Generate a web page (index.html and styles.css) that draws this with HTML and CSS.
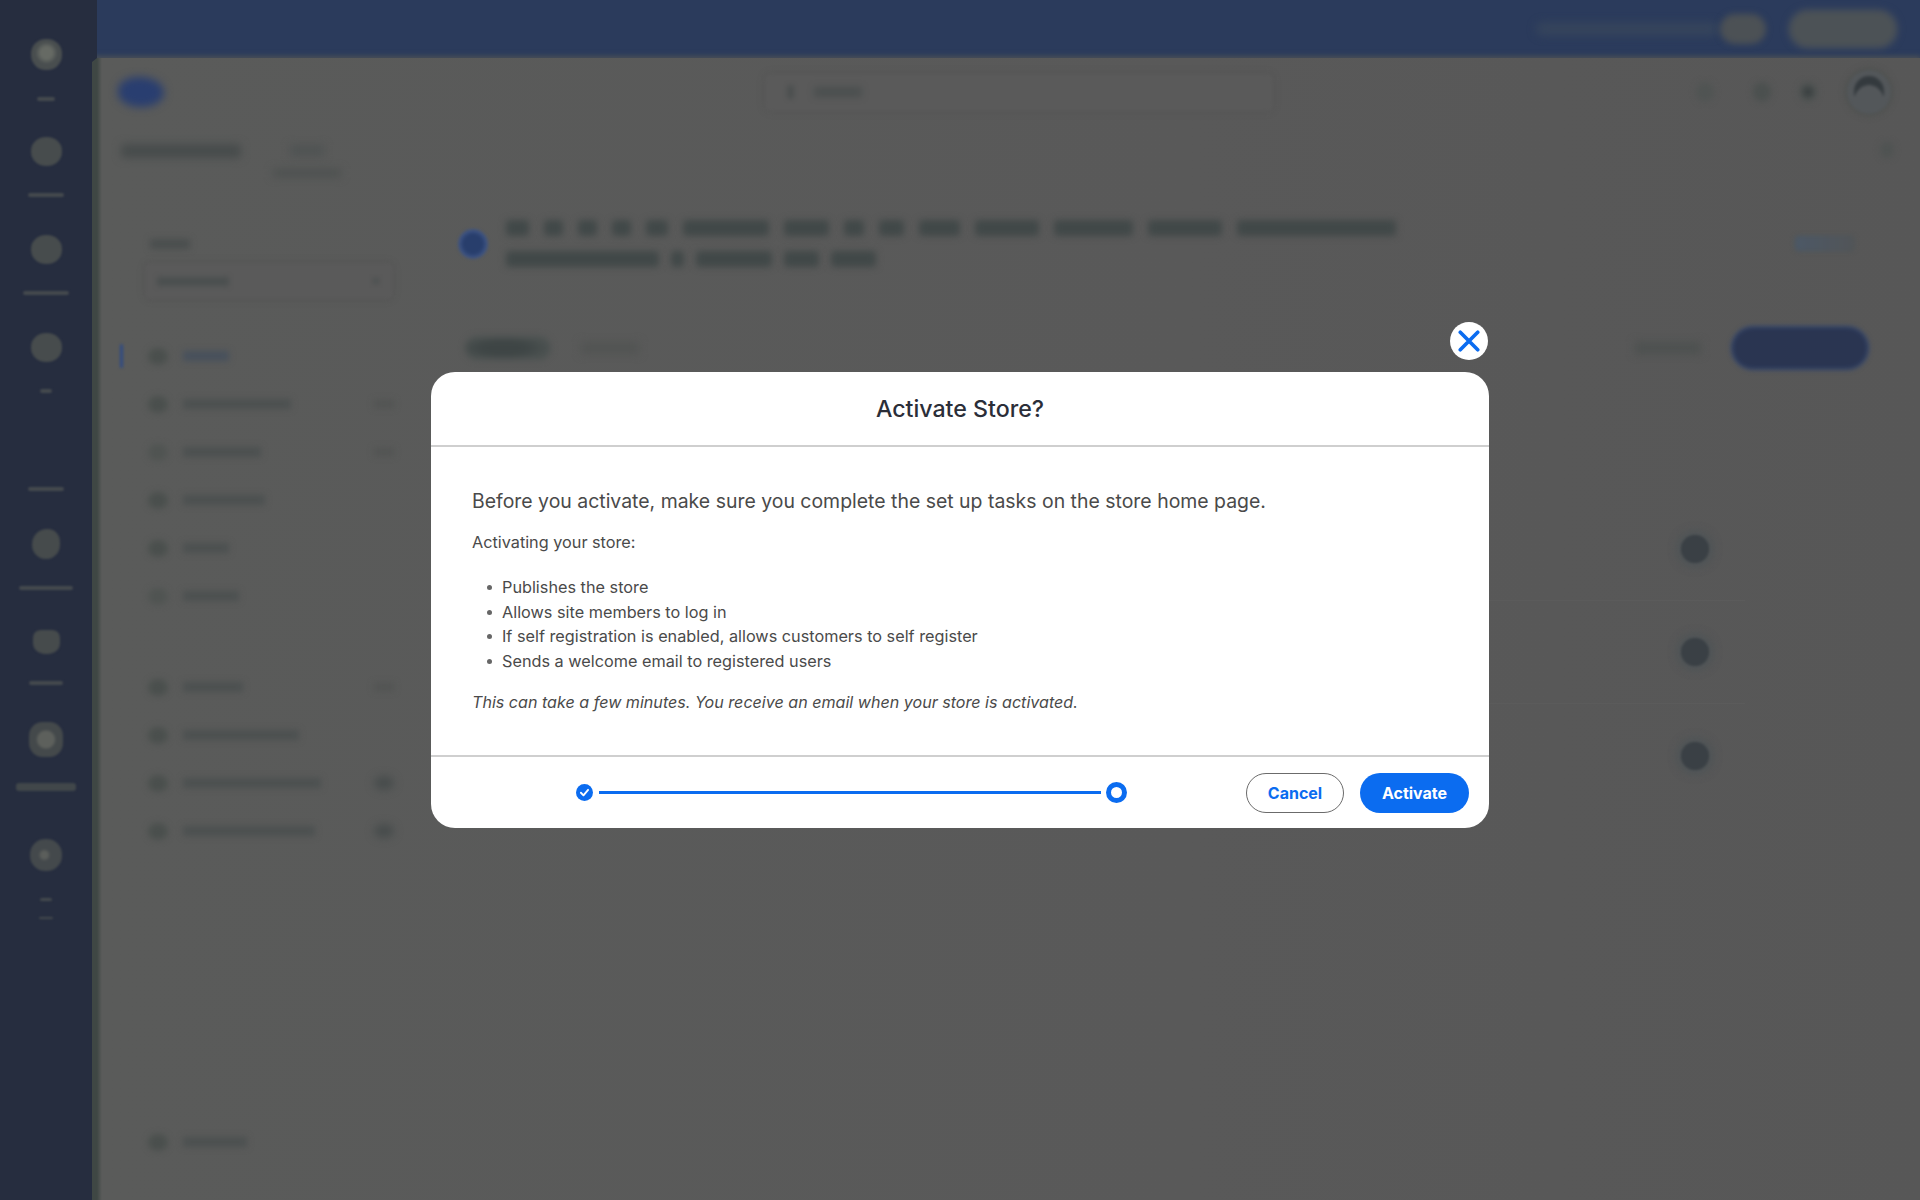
FILE: index.html
```html
<!DOCTYPE html>
<html lang="en">
<head>
<meta charset="utf-8">
<title>Activate Store?</title>
<link rel="stylesheet" href="styles.css">
</head>
<body>
<div class="app" aria-hidden="true">
  <nav class="rail">
    <div class="rail-item"><i class="rail-icon first"></i><i class="rail-label w18"></i></div>
    <div class="rail-item"><i class="rail-icon"></i><i class="rail-label w36"></i></div>
    <div class="rail-item"><i class="rail-icon"></i><i class="rail-label w46"></i></div>
    <div class="rail-item"><i class="rail-icon"></i><i class="rail-label w12"></i></div>
    <div class="rail-item"><i class="rail-icon none"></i><i class="rail-label w36"></i></div>
    <div class="rail-item"><i class="rail-icon oval"></i><i class="rail-label w54"></i></div>
    <div class="rail-item"><i class="rail-icon short"></i><i class="rail-label w34"></i></div>
    <div class="rail-item"><i class="rail-icon boxed"></i><i class="rail-label w60 thick"></i></div>
    <div class="rail-item last"><i class="rail-icon dim"></i><i class="rail-label w12"></i><i class="rail-label w14"></i></div>
  </nav>
  <div class="column">
    <header class="topbar">
      <i class="promo-text"></i>
      <i class="promo-pill"></i>
      <i class="promo-button"></i>
    </header>
    <main class="main">
      <div class="headbar">
        <i class="logo"></i>
        <div class="search"><i class="search-icon"></i><i class="search-text"></i></div>
        <div class="head-icons">
          <i class="head-icon faint"></i>
          <i class="head-icon"></i>
          <i class="head-icon dot"></i>
          <i class="avatar"></i>
        </div>
      </div>
      <div class="tabs">
        <i class="tab-active"></i>
        <div class="tab-stack"><i class="tab-top"></i><i class="tab-bottom"></i></div>
        <i class="tab-close"></i>
      </div>
      <div class="body">
        <aside class="sidebar">
          <i class="side-label"></i>
          <div class="side-select"><i class="side-select-text"></i><i class="side-caret"></i></div>
          <div class="nav-group first-group">
            <div class="nav-row"><i class="marker on"></i><i class="nav-icon"></i><i class="nav-text blue w46"></i></div>
            <div class="nav-row"><i class="marker"></i><i class="nav-icon"></i><i class="nav-text w108"></i><i class="nav-end"></i></div>
            <div class="nav-row"><i class="marker"></i><i class="nav-icon faint"></i><i class="nav-text w78"></i><i class="nav-end"></i></div>
            <div class="nav-row"><i class="marker"></i><i class="nav-icon"></i><i class="nav-text w82"></i></div>
            <div class="nav-row"><i class="marker"></i><i class="nav-icon"></i><i class="nav-text w46"></i></div>
            <div class="nav-row"><i class="marker"></i><i class="nav-icon faint"></i><i class="nav-text w56"></i></div>
          </div>
          <div class="nav-group">
            <div class="nav-row"><i class="marker"></i><i class="nav-icon"></i><i class="nav-text w60"></i><i class="nav-end"></i></div>
            <div class="nav-row"><i class="marker"></i><i class="nav-icon"></i><i class="nav-text w116"></i></div>
            <div class="nav-row"><i class="marker"></i><i class="nav-icon"></i><i class="nav-text w138"></i><i class="nav-end badge"></i></div>
            <div class="nav-row"><i class="marker"></i><i class="nav-icon"></i><i class="nav-text w132"></i><i class="nav-end badge"></i></div>
          </div>
          <div class="nav-group bottom-group">
            <div class="nav-row"><i class="marker"></i><i class="nav-icon"></i><i class="nav-text w64"></i></div>
          </div>
        </aside>
        <section class="content">
          <div class="banner">
            <i class="banner-icon"></i>
            <div class="banner-text">
              <div class="banner-line"><i class="word w23"></i><i class="word w19"></i><i class="word w19"></i><i class="word w19"></i><i class="word w22"></i><i class="word w86"></i><i class="word w45"></i><i class="word w20"></i><i class="word w25"></i><i class="word w41"></i><i class="word w64"></i><i class="word w79"></i><i class="word w74"></i><i class="word w159"></i></div>
              <div class="banner-line tight"><i class="word w153"></i><i class="word w13"></i><i class="word w76"></i><i class="word w35"></i><i class="word w45"></i></div>
            </div>
            <i class="banner-pill"></i>
          </div>
          <div class="toolbar">
            <i class="chip"></i>
            <i class="chip-ghost"></i>
            <i class="manage"></i>
            <i class="primary"></i>
          </div>
          <div class="rows">
            <div class="row"><i class="row-dot"></i></div>
            <div class="row"><i class="row-dot"></i></div>
            <div class="row"><i class="row-dot"></i></div>
          </div>
        </section>
      </div>
    </main>
  </div>
</div>

<div class="overlay">
  <div class="modal" role="dialog" aria-labelledby="modal-title">
    <button class="close" type="button" aria-label="Close">
      <svg class="close-icon" viewBox="0 0 24 24" aria-hidden="true"><path d="M2.5 2.5 21.5 21.5M21.5 2.5 2.5 21.5"/></svg>
    </button>
    <h1 class="modal-title" id="modal-title">Activate Store?</h1>
    <div class="modal-body">
      <p class="lead">Before you activate, make sure you complete the set up tasks on the store home page.</p>
      <p class="intro">Activating your store:</p>
      <ul class="list">
        <li>Publishes the store</li>
        <li>Allows site members to log in</li>
        <li>If self registration is enabled, allows customers to self register</li>
        <li>Sends a welcome email to registered users</li>
      </ul>
      <p class="note">This can take a few minutes. You receive an email when your store is activated.</p>
    </div>
    <div class="modal-footer">
      <div class="stepper">
        <svg class="step-done" viewBox="0 0 18 18" aria-hidden="true"><circle cx="9" cy="9" r="9"/><path d="M5.2 9.3 7.9 12 12.8 6.2"/></svg>
        <span class="step-line"></span>
        <span class="step-current"></span>
      </div>
      <div class="actions">
        <button class="btn btn-outline" type="button">Cancel</button>
        <button class="btn btn-solid" type="button">Activate</button>
      </div>
    </div>
  </div>
</div>
</body>
</html>
```

FILE: styles.css
```css
* { box-sizing: border-box; }
html, body { margin: 0; height: 100%; overflow: hidden; background: #595959; }
body { font-family: Inter, "Noto Sans", "Liberation Sans", sans-serif; }
i { display: block; flex: none; }

/* blurred application behind the dialog */
.app { display: flex; height: 1200px; }

.rail { width: 97px; flex: none; background: #262d3f; display: flex; flex-direction: column; padding-top: 5px; position: relative; z-index: 1; clip-path: polygon(0 0, 100% 0, 100% 58px, 92px 62px, 92px 100%, 0 100%); }
.rail-item { height: 98px; display: flex; flex-direction: column; align-items: center; padding-top: 34px; padding-right: 5px; }
.rail-item.last { height: 120px; padding-top: 50px; }
.rail-icon { width: 31px; height: 29px; border-radius: 48%; background: #474c4d; filter: blur(1px); }
.rail-icon.first { background: radial-gradient(circle at 50% 45%, #666a64 0 25%, #494e4f 48%); height: 31px; }
.rail-icon.none { visibility: hidden; }
.rail-icon.oval { width: 28px; height: 30px; border-radius: 55% 45% 50% 50%; background: #464b4c; }
.rail-icon.short { width: 27px; height: 24px; border-radius: 30% 30% 45% 45%; margin-top: 3px; background: #464b4c; }
.rail-icon.boxed { width: 34px; height: 35px; margin-top: -3px; border-radius: 40%; background: radial-gradient(circle at 50% 50%, #5d605c 0 32%, #44494b 42%); }
.rail-icon.dim { width: 32px; height: 32px; background: radial-gradient(circle at 45% 50%, #5b5e5b 0 14%, #44494c 26%); }
.rail-label { height: 4px; border-radius: 3px; background: #454a4e; margin-top: 27px; filter: blur(1px); }
.rail-icon.boxed + .rail-label { margin-top: 26px; }
.rail-label.thick { height: 8px; background: #41474a; }
.rail-item.last .rail-label { margin-top: 27px; height: 3px; }
.rail-item.last .rail-label + .rail-label { margin-top: 16px; height: 2px; }

.column { flex: 1; min-width: 0; display: flex; flex-direction: column; margin-left: -5px; }
.topbar { height: 58px; flex: none; margin-left: 5px; background: #2b3b5c; display: flex; align-items: center; justify-content: flex-end; padding: 0 24px 0 0; position: relative; }
.promo-text { width: 183px; height: 14px; border-radius: 7px; background: #35445c; filter: blur(4px); }
.promo-pill { width: 46px; height: 30px; border-radius: 15px; background: #4c5155; filter: blur(3px); margin-left: 1px; }
.promo-button { width: 106px; height: 36px; border-radius: 18px; background: #4c5256; box-shadow: 0 0 0 3px #3a465c; filter: blur(3px); margin-left: 24px; }

.main { flex: 1; min-height: 0; display: flex; flex-direction: column; background: linear-gradient(90deg, #3f4744 0, #3f4744 5px, #5a5b5a 10px, #595959 60%, #575757 100%); box-shadow: 0 -1px 5px 1px #4b5056; position: relative; }

.headbar { height: 68px; flex: none; display: flex; align-items: center; padding: 0 29px 0 26px; }
.logo { width: 46px; height: 30px; border-radius: 50% 60% 55% 55%; background: #293e70; filter: blur(4px); }
.search { width: 508px; height: 37px; margin-left: 601px; display: flex; align-items: center; padding-left: 22px; border-radius: 6px; background: #5a5a5a; box-shadow: 0 0 5px 1px #555; filter: blur(1.5px); }
.search-icon { width: 7px; height: 14px; border-radius: 4px; background: #4b4f4f; filter: blur(2px); }
.search-text { width: 48px; height: 10px; margin-left: 20px; background: #4b4f4f; filter: blur(3px); }
.head-icons { margin-left: auto; display: flex; align-items: center; }
.head-icon { width: 18px; height: 20px; border-radius: 50%; background: #4b504f; filter: blur(3px); margin-right: 28px; }
.head-icon.faint { background: #505453; margin-right: 39px; }
.head-icon.dot { margin-right: 30px; background: radial-gradient(circle, #363c3d 0 25%, #4d5251 45%); }
.avatar { width: 44px; height: 44px; border-radius: 50%; background: #53575a; position: relative; filter: blur(1.5px); box-shadow: 0 0 5px 2px #4e514f; }
.avatar::after { content: ""; position: absolute; left: 7px; top: 6px; width: 30px; height: 20px; border-radius: 15px 15px 0 0; background: radial-gradient(ellipse 15px 16px at 50% 125%, transparent 0 98%, #343a3e 100%); }

.tabs { height: 60px; flex: none; display: flex; align-items: flex-start; padding: 4px 26px 0 29px; }
.tab-active { width: 120px; height: 14px; margin-top: 14px; border-radius: 4px; background: #474c4c; filter: blur(4px); }
.tab-stack { margin-left: 32px; display: flex; flex-direction: column; align-items: center; }
.tab-top { width: 34px; height: 11px; margin-top: 15px; background: #4f5353; filter: blur(4px); }
.tab-bottom { width: 68px; height: 8px; margin-top: 13px; background: #4d5150; filter: blur(4px); }
.tab-close { width: 14px; height: 16px; margin-left: auto; margin-top: 12px; background: #4f5352; border-radius: 50%; filter: blur(3px); }

.body { flex: 1; min-height: 0; display: flex; }
.sidebar { width: 338px; flex: none; display: flex; flex-direction: column; padding: 53px 24px 34px 58px; }
.side-label { width: 40px; height: 10px; background: #4a4e4e; filter: blur(3px); }
.side-select { height: 36px; margin-top: 14px; margin-left: -5px; width: 248px; display: flex; align-items: center; padding: 0 14px 0 12px; border-radius: 6px; background: #5a5a5a; box-shadow: 0 0 5px 1px #545454; filter: blur(1.5px); }
.side-select-text { width: 72px; height: 9px; background: #4a4f4f; filter: blur(2.5px); }
.side-caret { width: 6px; height: 6px; margin-left: auto; background: #4c5050; filter: blur(2px); }
.nav-group { display: flex; flex-direction: column; margin-left: -30px; }
.first-group { margin-top: 33px; }
.nav-group + .nav-group { margin-top: 43px; }
.nav-group.bottom-group { margin-top: auto; }
.nav-row { height: 48px; flex: none; display: flex; align-items: center; }
.marker { width: 3px; height: 24px; margin-right: 25px; border-radius: 2px; }
.marker.on { background: #2f4a84; filter: blur(1.5px); }
.nav-icon { width: 20px; height: 17px; border-radius: 50%; background: #4a4f4d; filter: blur(3px); }
.nav-icon.faint { background: #505452; }
.nav-text { height: 10px; margin-left: 15px; background: #4c5050; filter: blur(3px); }
.nav-text.blue { background: #47505c; }
.nav-end { width: 20px; height: 8px; margin-left: auto; margin-right: 12px; background: #525453; filter: blur(3px); }
.nav-end.badge { height: 14px; background: #474c4c; border-radius: 50%; filter: blur(4px); }

.content { flex: 1; min-width: 0; display: flex; flex-direction: column; }
.banner { display: flex; align-items: center; padding: 9px 65px 0 28px; height: 106px; flex: none; }
.banner-icon { width: 30px; height: 30px; border-radius: 50%; background: radial-gradient(circle, #283e6c 0 45%, #3c5282 62%, #4a5a72 100%); filter: blur(1.5px); }
.banner-text { margin-left: 18px; display: flex; flex-direction: column; gap: 15px; }
.banner-line { display: flex; gap: 15px; }
.banner-line.tight { gap: 12px; }
.word { height: 16px; border-radius: 3px; background: #414848; filter: blur(3.5px); }
.banner-pill { margin-left: auto; width: 61px; height: 17px; border: 1px solid #4e5557; border-radius: 5px; background: linear-gradient(90deg, #4c5866, #525558); filter: blur(2px); }
.toolbar { height: 66px; flex: none; display: flex; align-items: center; padding: 0 53px 0 35px; margin-top: 23px; }
.chip { width: 86px; height: 24px; border-radius: 12px; background: radial-gradient(ellipse at 45% 50%, #3e4545 0 35%, #4c5251 70%); filter: blur(3px); }
.chip-ghost { width: 58px; height: 12px; margin-left: 30px; background: #525453; filter: blur(4px); }
.manage { width: 66px; height: 12px; margin-left: auto; background: #4d5150; filter: blur(4px); }
.primary { width: 134px; height: 40px; margin-left: 32px; border-radius: 20px; background: #2a3551; box-shadow: 0 0 2px 2px #2f4470; filter: blur(2px); }
.rows { margin: 115px 0 0 35px; width: 1280px; padding-top: 2px; display: flex; flex-direction: column; border-radius: 6px; }
.row { height: 103px; flex: none; display: flex; align-items: center; justify-content: flex-end; padding-right: 36px; border-bottom: 1px solid #5b5b5b; }
.row:last-child { border-bottom: 0; }
.row-dot { width: 28px; height: 28px; border-radius: 50%; background: #3a4045; box-shadow: 0 0 8px 4px #4d5356; filter: blur(.8px); }

.w12 { width: 12px; } .w13 { width: 13px; } .w14 { width: 14px; } .w18 { width: 18px; } .w19 { width: 19px; }
.w20 { width: 20px; } .w22 { width: 22px; } .w23 { width: 23px; } .w25 { width: 25px; } .w34 { width: 34px; } .w35 { width: 35px; } .w36 { width: 36px; }
.w41 { width: 41px; } .w45 { width: 45px; } .w46 { width: 46px; } .w54 { width: 54px; } .w56 { width: 56px; }
.w60 { width: 60px; } .w64 { width: 64px; } .w74 { width: 74px; } .w76 { width: 76px; } .w78 { width: 78px; } .w79 { width: 79px; } .w82 { width: 82px; } .w86 { width: 86px; }
.w108 { width: 108px; } .w116 { width: 116px; } .w132 { width: 132px; }
.w138 { width: 138px; } .w153 { width: 153px; } .w159 { width: 159px; }

/* dialog */
.overlay { position: fixed; inset: 0; z-index: 10; display: flex; align-items: center; justify-content: center; }
.modal { width: 1058px; height: 456px; background: #fff; border-radius: 24px; display: flex; flex-direction: column; position: relative; }
.close { position: absolute; top: -50px; right: 1px; width: 38px; height: 38px; padding: 0; border: 0; border-radius: 50%; background: #fff; display: flex; align-items: center; justify-content: center; }
.close-icon { width: 22px; height: 22px; fill: none; stroke: #0b6cf0; stroke-width: 4; stroke-linecap: round; }
.modal-title { margin: 0; height: 75px; flex: none; display: flex; align-items: center; justify-content: center; border-bottom: 2px solid #cfcfcf; font-size: 23.2px; font-weight: 500; color: #2b2e38; }
.modal-body { flex: 1; min-height: 0; padding: 40px 41px 0; color: #4a4a4a; }
.lead { margin: 0; font-size: 19.45px; line-height: 28px; }
.intro { margin: 15px 0 0; font-size: 16.24px; line-height: 24px; }
.list { margin: 21px 0 0; padding: 0 0 0 15px; font-size: 16.25px; line-height: 24.7px; list-style: none; }
.list li { display: flex; align-items: center; gap: 10px; }
.list li::before { content: ""; width: 5px; height: 5px; border-radius: 50%; background: #666; flex: none; }
.note { margin: 16px 0 0; font-size: 16.1px; line-height: 24px; font-style: italic; }
.modal-footer { height: 73px; flex: none; display: flex; align-items: center; padding: 0 20px 0 145px; border-top: 2px solid #cfcfcf; }
.stepper { display: flex; align-items: center; }
.step-done { width: 17px; height: 17px; }
.step-done circle { fill: #0b6cf0; }
.step-done path { fill: none; stroke: #fff; stroke-width: 2; stroke-linecap: round; stroke-linejoin: round; }
.step-line { width: 502px; height: 3px; margin-left: 6px; background: #0b6cf0; }
.step-current { width: 21px; height: 21px; margin-left: 5px; border-radius: 50%; background: #fff; border: 5px solid #0b6cf0; }
.actions { margin-left: auto; display: flex; gap: 16px; }
.btn { height: 40px; padding: 0; border-radius: 20px; font-family: inherit; font-size: 16px; font-weight: 700; }
.btn-outline { width: 98px; background: #fff; color: #0b6cf0; border: 1px solid #6b6b6b; }
.btn-solid { width: 109px; background: #0b6cf0; color: #fff; border: 0; }
```
